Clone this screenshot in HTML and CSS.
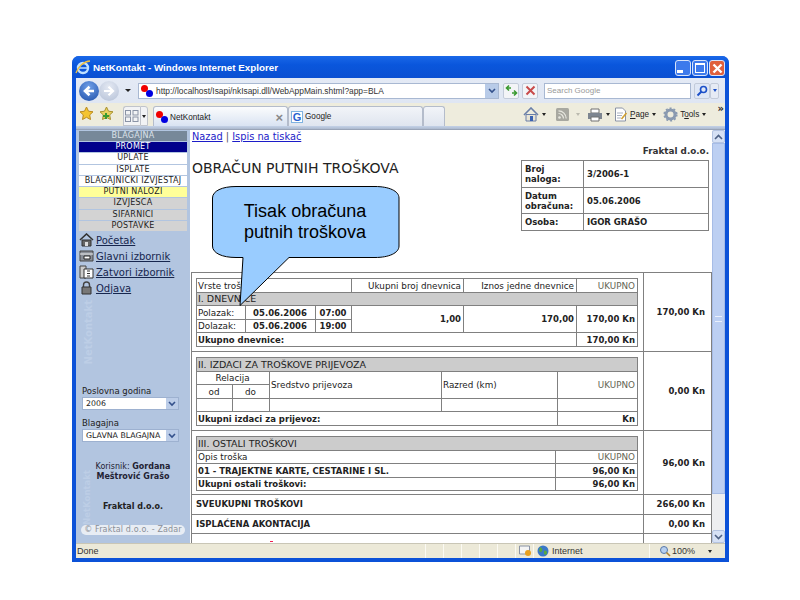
FILE: index.html
```html
<!DOCTYPE html>
<html lang="hr">
<head>
    <meta charset="UTF-8">
    <title>NetKontakt - Windows Internet Explorer</title>
    <link rel="stylesheet" href="styles.css">
</head>
<body>
<div class="window">
    <div class="titlebar">
        <svg class="ie-logo" width="16" height="16" viewBox="0 0 16 16"><circle cx="8" cy="9" r="5" fill="none" stroke="#bfe0ff" stroke-width="2.4"/><path d="M4 9h8" stroke="#bfe0ff" stroke-width="1.6"/><path d="M1 14C3 8 9 2 15 2" fill="none" stroke="#f0c040" stroke-width="1.4"/></svg>
        <span class="title-text">NetKontakt - Windows Internet Explorer</span>
        <div class="win-buttons">
            <span class="win-btn"><i class="glyph-min"></i></span>
            <span class="win-btn"><i class="glyph-max"></i></span>
            <span class="win-btn close">
                <svg width="11" height="11" viewBox="0 0 11 11"><path d="M1.5 1.5l8 8M9.5 1.5l-8 8" stroke="#fff" stroke-width="2.4"/></svg>
            </span>
        </div>
    </div>

    <div class="navbar">
        <span class="round-btn back">
            <svg width="14" height="14" viewBox="0 0 14 14"><path d="M12 7H4M7.5 2.8L3 7l4.5 4.2" fill="none" stroke="#fff" stroke-width="2.6"/></svg>
        </span>
        <span class="round-btn forward">
            <svg width="14" height="14" viewBox="0 0 14 14"><path d="M2 7h8M6.5 2.8L11 7l-4.5 4.2" fill="none" stroke="#fff" stroke-width="2.2"/></svg>
        </span>
        <span class="caret nav-caret"></span>
        <div class="address">
            <span class="favicon"><i class="dot red"></i><i class="dot blue"></i></span>
            <span class="url">http://localhost/Isapi/nkIsapi.dll/WebAppMain.shtml?app=BLA</span>
            <span class="drop-btn"><svg width="8" height="6" viewBox="0 0 8 6"><path d="M1 1l3 3 3-3" fill="none" stroke="#34518c" stroke-width="1.6"/></svg></span>
        </div>
        <span class="tool-btn">
            <svg width="13" height="13" viewBox="0 0 13 13"><path d="M6 4H2M4 1.5L1.5 4 4 6.5" fill="none" stroke="#3a9a30" stroke-width="1.6"/><path d="M7 9h4M9 6.500L11.500 9 9 11.500" fill="none" stroke="#3a9a30" stroke-width="1.6"/></svg>
        </span>
        <span class="tool-btn stop">
            <svg width="11" height="11" viewBox="0 0 11 11"><path d="M1.5 1.5l8 8M9.500 1.500l-8 8" stroke="#c84a4a" stroke-width="2"/></svg>
        </span>
        <div class="search">Search Google</div>
        <span class="tool-btn search-go">
            <svg width="12" height="12" viewBox="0 0 12 12"><circle cx="7.500" cy="4.500" r="3" fill="none" stroke="#1c50c8" stroke-width="1.600"/><path d="M5.500 6.500L1.500 10.500" stroke="#1c50c8" stroke-width="2"/></svg>
        </span>
        <span class="tool-btn search-more"><span class="caret blue-caret"></span></span>
    </div>

    <div class="cmdbar">
        <svg class="star" width="15" height="15" viewBox="0 0 15 15"><path d="M7.500 1l2 4.200 4.500.6-3.300 3.100.8 4.600-4-2.200-4 2.200.8-4.600L1 5.800l4.500-.6z" fill="#f4c430" stroke="#b98a20"/></svg>
        <svg class="star add" width="15" height="15" viewBox="0 0 15 15"><path d="M7.500 1l2 4.200 4.500.6-3.300 3.100.8 4.600-4-2.200-4 2.200.8-4.600L1 5.800l4.500-.6z" fill="#e8d060" stroke="#a89030"/><path d="M4 10h6M7 7v6" stroke="#3a9a30" stroke-width="2"/></svg>
        <span class="tab-list">
            <svg width="14" height="12" viewBox="0 0 14 12"><g fill="none" stroke="#8a93a5"><rect x=".5" y=".5" width="5" height="4.500"/><rect x="8" y=".5" width="5" height="4.500"/><rect x=".5" y="7" width="5" height="4.500"/><rect x="8" y="7" width="5" height="4.500"/></g></svg>
        </span>
        <span class="tab-list-drop"><span class="caret"></span></span>
        <div class="tab active">
            <span class="favicon"><i class="dot red"></i><i class="dot blue"></i></span>
            <span class="tab-name">NetKontakt</span>
            <span class="tab-close">×</span>
        </div>
        <div class="tab">
            <span class="google-icon">G</span>
            <span class="tab-name">Google</span>
        </div>
        <div class="tab new-tab"></div>
        <div class="commands">
            <svg class="home" width="16" height="15" viewBox="0 0 16 15"><path d="M1 8l7-7 7 7" fill="none" stroke="#6a7fa8" stroke-width="1.600"/><path d="M3 7.500h10V14H3z" fill="#e8e4d4" stroke="#6a7fa8"/><path d="M7 9h3v5H7z" fill="#3a62b0"/></svg>
            <span class="caret"></span>
            <svg class="rss" width="13" height="13" viewBox="0 0 13 13"><rect width="13" height="13" rx="1.500" fill="#a8a8a0"/><circle cx="3.500" cy="9.500" r="1.300" fill="#e8e8e0"/><path d="M2.500 5.500a5 5 0 0 1 5 5M2.500 2.800a7.700 7.700 0 0 1 7.700 7.700" fill="none" stroke="#e8e8e0" stroke-width="1.200"/></svg>
            <span class="caret faint"></span>
            <svg class="print" width="16" height="14" viewBox="0 0 16 14"><path d="M4 1h8v4H4z" fill="#fff" stroke="#707070"/><path d="M1 5h14v6H1z" fill="#7d8590"/><path d="M4 9h8v4H4z" fill="#fff" stroke="#707070"/></svg>
            <span class="caret"></span>
            <svg class="page-icon" width="14" height="15" viewBox="0 0 14 15"><path d="M1.500 1h7l3 3v10h-10z" fill="#fff" stroke="#8a93a5"/><path d="M3 6h6M3 8.500h5M3 11h4" stroke="#a8b0c0"/><path d="M12.500 6l-5 6" stroke="#d0a030" stroke-width="1.600"/></svg>
            <span class="cmd-label"><u>P</u>age</span>
            <span class="caret"></span>
            <svg class="gear" width="15" height="15" viewBox="0 0 15 15"><circle cx="7.500" cy="7.500" r="4.500" fill="none" stroke="#8a9ab0" stroke-width="3"/><circle cx="7.500" cy="7.500" r="6.300" fill="none" stroke="#8a9ab0" stroke-width="1.600" stroke-dasharray="2 2"/></svg>
            <span class="cmd-label">T<u>o</u>ols</span>
            <span class="caret"></span>
            <span class="chevrons">»</span>
        </div>
    </div>
    <div class="chrome-line"></div>

    <div class="page">
        <aside class="sidebar">
            <div class="watermark wm-top">NetKontakt</div>
            <div class="watermark wm-bottom">NetKontakt</div>

            <div class="menu">
                <div class="menu-item head">BLAGAJNA</div>
                <div class="menu-item selected">PROMET</div>
                <div class="menu-item plain">UPLATE</div>
                <div class="menu-item plain">ISPLATE</div>
                <div class="menu-item plain">BLAGAJNIČKI IZVJEŠTAJ</div>
                <div class="menu-item current">PUTNI NALOZI</div>
                <div class="menu-item group">IZVJEŠĆA</div>
                <div class="menu-item group">ŠIFARNICI</div>
                <div class="menu-item group">POSTAVKE</div>
            </div>

            <div class="side-links">
                <a class="side-link">
                    <svg width="15" height="14" viewBox="0 0 15 14"><path d="M1 7l6.500-6L14 7" fill="none" stroke="#333" stroke-width="1.600"/><path d="M3 7h9v6H3z" fill="#666" stroke="#333"/><path d="M6 9h3v4H6z" fill="#ddd"/></svg>
                    <span>Početak</span>
                </a>
                <a class="side-link">
                    <svg width="15" height="14" viewBox="0 0 15 14"><path d="M1 2h13v10H1z" fill="#8a8f98" stroke="#444"/><path d="M1 5h13" stroke="#eee"/><path d="M5 7h6v3H5z" fill="#fff" stroke="#222"/></svg>
                    <span>Glavni izbornik</span>
                </a>
                <a class="side-link">
                    <svg width="15" height="14" viewBox="0 0 15 14"><path d="M1 1h6v12H1z" fill="#ccc" stroke="#444"/><path d="M5 4h9v9H5z" fill="#fff" stroke="#333"/><path d="M8 6h3M8 8.500h3M8 11h3" stroke="#333"/></svg>
                    <span>Zatvori izbornik</span>
                </a>
                <a class="side-link">
                    <svg width="15" height="14" viewBox="0 0 15 14"><path d="M4.500 6V4a3 3 0 0 1 6 0v2" fill="none" stroke="#444" stroke-width="1.400"/><path d="M3 6h9v7H3z" fill="#777" stroke="#333"/></svg>
                    <span>Odjava</span>
                </a>
            </div>

            <div class="side-form">
                <label>Poslovna godina</label>
                <div class="fake-select"><span>2006</span><i class="select-btn"><svg width="8" height="6" viewBox="0 0 8 6"><path d="M1 1l3 3 3-3" fill="none" stroke="#34518c" stroke-width="1.600"/></svg></i></div>
                <label class="second">Blagajna</label>
                <div class="fake-select"><span>GLAVNA BLAGAJNA</span><i class="select-btn"><svg width="8" height="6" viewBox="0 0 8 6"><path d="M1 1l3 3 3-3" fill="none" stroke="#34518c" stroke-width="1.600"/></svg></i></div>
            </div>

            <div class="user-info">Korisnik: <b>Gordana</b><br><b>Meštrović Grašo</b></div>
            <div class="firm">Fraktal d.o.o.</div>
            <div class="copyright">© Fraktal d.o.o. - Zadar</div>
        </aside>

        <main class="content">
            <div class="top-links"><a href="#">Nazad</a> | <a href="#">Ispis na tiskač</a></div>

            <div class="report-head">
                <h1>OBRAČUN PUTNIH TROŠKOVA</h1>
                <div class="report-meta">
                    <div class="company">Fraktal d.o.o.</div>
                    <table class="info">
                        <colgroup><col class="c-label"><col></colgroup>
                        <tr class="r27"><th>Broj<br>naloga:</th><td>3/2006-1</td></tr>
                        <tr class="r26"><th>Datum<br>obračuna:</th><td>05.06.2006</td></tr>
                        <tr class="r17"><th>Osoba:</th><td>IGOR GRAŠO</td></tr>
                    </table>
                </div>
            </div>

            <table class="report">
                <colgroup><col class="c-main"><col></colgroup>
                <tr class="sec1">
                    <td class="inner-cell">
                        <table class="grid">
                            <colgroup><col style="width:49px"><col style="width:70px"><col style="width:36px"><col style="width:112px"><col style="width:113px"><col></colgroup>
                            <tr><td colspan="3">Vrste troška</td><td class="right">Ukupni broj dnevnica</td><td class="right">Iznos jedne dnevnice</td><td class="right muted">UKUPNO</td></tr>
                            <tr class="band"><td colspan="6">I. DNEVNICE</td></tr>
                            <tr><td>Polazak:</td><td class="strong center">05.06.2006</td><td class="strong center">07:00</td><td rowspan="2" class="strong right">1,00</td><td rowspan="2" class="strong right">170,00</td><td rowspan="2" class="strong right">170,00 Kn</td></tr>
                            <tr><td>Dolazak:</td><td class="strong center">05.06.2006</td><td class="strong center">19:00</td></tr>
                            <tr><td colspan="5" class="strong">Ukupno dnevnice:</td><td class="strong right">170,00 Kn</td></tr>
                        </table>
                    </td>
                    <td class="total">170,00 Kn</td>
                </tr>
                <tr class="sec2">
                    <td class="inner-cell">
                        <table class="grid">
                            <colgroup><col style="width:36px"><col style="width:37px"><col style="width:172px"><col style="width:116px"><col></colgroup>
                            <tr class="band"><td colspan="5">II. IZDACI ZA TROŠKOVE PRIJEVOZA</td></tr>
                            <tr><td colspan="2" class="center">Relacija</td><td rowspan="2">Sredstvo prijevoza</td><td rowspan="2">Razred (km)</td><td rowspan="2" class="right muted">UKUPNO</td></tr>
                            <tr><td class="center">od</td><td class="center">do</td></tr>
                            <tr><td></td><td></td><td></td><td></td><td></td></tr>
                            <tr><td colspan="4" class="strong">Ukupni izdaci za prijevoz:</td><td class="strong right">Kn</td></tr>
                        </table>
                    </td>
                    <td class="total">0,00 Kn</td>
                </tr>
                <tr class="sec3">
                    <td class="inner-cell">
                        <table class="grid">
                            <colgroup><col style="width:359px"><col></colgroup>
                            <tr class="band"><td colspan="2">III. OSTALI TROŠKOVI</td></tr>
                            <tr><td>Opis troška</td><td class="right muted">UKUPNO</td></tr>
                            <tr><td class="strong">01 - TRAJEKTNE KARTE, CESTARINE I SL.</td><td class="strong right">96,00 Kn</td></tr>
                            <tr><td class="strong">Ukupni ostali troškovi:</td><td class="strong right">96,00 Kn</td></tr>
                        </table>
                    </td>
                    <td class="total">96,00 Kn</td>
                </tr>
                <tr class="sum"><td class="sum-label">SVEUKUPNI TROŠKOVI</td><td class="total">266,00 Kn</td></tr>
                <tr class="sum"><td class="sum-label">ISPLAĆENA AKONTACIJA</td><td class="total">0,00 Kn</td></tr>
                <tr class="sum"><td class="cut-row"><i class="red-mark"></i></td><td></td></tr>
            </table>

            <!-- oblacic preko tablice -->
            <svg class="callout" width="196" height="125" viewBox="0 0 196 125">
                <path d="M25 1.500H164C178 1.500 188 6 188 13V61C188 68 178 72.500 164 72.500H78L29 120.500L32 72.500H25C11 72.500 1.500 68 1.500 61V13C1.500 6 11 1.500 25 1.500Z" fill="#99ccff" stroke="#000"/>
                <text x="94" y="32" text-anchor="middle">Tisak obračuna</text>
                <text x="94" y="53" text-anchor="middle">putnih troškova</text>
            </svg>
        </main>

        <div class="scrollbar">
            <span class="sb-btn"><svg width="9" height="6" viewBox="0 0 9 6"><path d="M1 5l3.500-3.500L8 5" fill="none" stroke="#4d6185" stroke-width="1.600"/></svg></span>
            <div class="sb-thumb"><i></i></div>
            <div class="sb-track"></div>
            <span class="sb-btn"><svg width="9" height="6" viewBox="0 0 9 6"><path d="M1 1l3.500 3.500L8 1" fill="none" stroke="#4d6185" stroke-width="1.600"/></svg></span>
        </div>
    </div>

    <div class="statusbar">
        <span class="status-text">Done</span>
        <span class="status-cell narrow"></span>
        <span class="status-cell narrow"></span>
        <span class="status-cell narrow"></span>
        <span class="status-cell narrow"></span>
        <span class="status-cell narrow"></span>
        <span class="status-cell lock">
            <svg width="13" height="12" viewBox="0 0 13 12"><path d="M.5 1h10v8H.5z" fill="#f5f5f5" stroke="#8a93a5"/><circle cx="9" cy="8" r="3" fill="#e8a020"/></svg>
        </span>
        <span class="status-cell zone">
            <svg width="12" height="12" viewBox="0 0 12 12"><circle cx="6" cy="6" r="5.500" fill="#3a78c8"/><path d="M3 2c2 1 3 2 2 4s-2 1-3 0M7 6c2-1 3 0 3 2s-2 2-3 1z" fill="#58a840"/></svg>
            <span>Internet</span>
        </span>
        <span class="status-cell zoom">
            <svg width="12" height="12" viewBox="0 0 12 12"><circle cx="5" cy="5" r="3.500" fill="#b8d0f0" stroke="#5878a8"/><path d="M7.500 7.500L11 11" stroke="#b08030" stroke-width="1.600"/></svg>
            <span>100%</span>
            <span class="caret"></span>
        </span>
    </div>
</div>
</body>
</html>
```

FILE: styles.css
```css
* {
    margin: 0;
    padding: 0;
    box-sizing: border-box;
}

body {
    background: #fff;
    font-family: "DejaVu Sans", Verdana, sans-serif;
    font-size: 8.5px;
    color: #222;
    overflow: hidden;
}

.window {
    width: 657px;
    height: 506px;
    margin: 56px 0 0 72px;
    padding: 0 4px 4px;
    background: #0c52d8;
    border-radius: 7px 7px 0 0;
    display: flex;
    flex-direction: column;
    overflow: hidden;
}

.caret {
    display: inline-block;
    width: 0;
    height: 0;
    border-left: 3px solid transparent;
    border-right: 3px solid transparent;
    border-top: 3px solid #222;
}

/* title bar */
.titlebar {
    height: 22px;
    flex: none;
    margin: 0 -4px;
    padding: 0 4px 0 3px;
    background: linear-gradient(#1a68e8 0%, #0a56dc 40%, #0b50d2 100%);
    display: flex;
    align-items: center;
    gap: 1px;
}

.title-text {
    font-family: "Liberation Sans", sans-serif;
    font-size: 9.8px;
    font-weight: 700;
    color: #fff;
    margin-left: 1px;
}

.win-buttons {
    margin-left: auto;
    display: flex;
    gap: 1px;
    padding-top: 2px;
}

.win-btn {
    width: 16px;
    height: 16px;
    border: 1px solid #d8e4fa;
    border-radius: 3px;
    background: #3d7aec;
    display: flex;
    align-items: center;
    justify-content: center;
    position: relative;
}

.win-btn.close {
    background: #e0603c;
}

.glyph-min {
    width: 6px;
    height: 3px;
    background: #fff;
    margin: 7px 6px 0 0;
}

.glyph-max {
    width: 10px;
    height: 10px;
    border: 1px solid #fff;
    border-top-width: 2px;
}

/* address row */
.navbar {
    height: 25px;
    flex: none;
    background: linear-gradient(#e4eaf5, #dfe6f3);
    display: flex;
    align-items: center;
    padding-left: 3px;
}

.round-btn {
    width: 20px;
    height: 20px;
    border-radius: 50%;
    display: flex;
    align-items: center;
    justify-content: center;
}

.round-btn.back {
    background: radial-gradient(circle at 50% 30%, #6f9fe8, #1f4fa8);
}

.round-btn.forward {
    background: radial-gradient(circle at 50% 30%, #e4e9f3, #b4c0d6);
}

.nav-caret {
    margin: 0 7px 0 6px;
}

.favicon {
    position: relative;
    width: 12px;
    height: 12px;
    flex: none;
}

.dot {
    position: absolute;
    width: 7px;
    height: 7px;
    border-radius: 50%;
}

.dot.red {
    background: #f00000;
    left: 0;
    top: 0;
}

.dot.blue {
    background: #0000e0;
    right: 0;
    bottom: 0;
}

.address {
    width: 361px;
    height: 16px;
    background: #fff;
    border: 1px solid #a8b8d2;
    display: flex;
    align-items: center;
    padding-left: 2px;
}

.url {
    font-family: "Liberation Sans", sans-serif;
    font-size: 8.4px;
    color: #333;
    margin-left: 3px;
}

.drop-btn {
    margin-left: auto;
    width: 13px;
    height: 14px;
    background: #b8cbe8;
    display: flex;
    align-items: center;
    justify-content: center;
}

.tool-btn {
    width: 16px;
    height: 16px;
    margin-left: 4px;
    background: #f3f4f7;
    border: 1px solid #c3cbd9;
    border-radius: 2px;
    display: flex;
    align-items: center;
    justify-content: center;
}

.tool-btn.stop {
    margin-left: 3px;
}

.search {
    width: 147px;
    height: 16px;
    margin-left: 6px;
    background: #fff;
    border: 1px solid #a8b8d2;
    font-family: "Liberation Sans", sans-serif;
    font-size: 8px;
    line-height: 14px;
    color: #999;
    padding-left: 2px;
}

.tool-btn.search-go {
    margin-left: 3px;
    background: #dfe7f5;
}

.tool-btn.search-more {
    margin-left: 0;
    width: 9px;
    background: #e6ebf5;
}

.blue-caret {
    border-top-color: #1c50c8;
    border-left-width: 2px;
    border-right-width: 2px;
}

/* tabs and commands */
.cmdbar {
    height: 23px;
    flex: none;
    background: #eeecdd;
    display: flex;
    align-items: flex-end;
    padding-left: 3px;
}

.star {
    margin: 0 0 5px 0;
    flex: none;
}

.star.add {
    margin-left: 5px;
}

.tab-list {
    width: 17px;
    height: 20px;
    margin-left: 9px;
    border: 1px solid #c0c4cc;
    border-right: 0;
    border-radius: 3px 0 0 0;
    background: #f2f3f5;
    display: flex;
    align-items: center;
    justify-content: center;
    flex: none;
}

.tab-list-drop {
    width: 8px;
    height: 20px;
    background: #f2f3f5;
    border: 1px solid #c0c4cc;
    border-radius: 0 3px 0 0;
    display: flex;
    align-items: center;
    justify-content: center;
    flex: none;
}

.tab-list-drop .caret {
    border-left-width: 2px;
    border-right-width: 2px;
}

.tab {
    width: 135px;
    height: 20px;
    flex: none;
    background: linear-gradient(#f2f4f8, #dfe5ef);
    border: 1px solid #b4bccb;
    border-bottom: 0;
    border-radius: 3px 3px 0 0;
    display: flex;
    align-items: center;
    padding-left: 2px;
    gap: 2px;
    font-family: "Liberation Sans", sans-serif;
    font-size: 8.2px;
}

.tab.active {
    margin-left: 5px;
    background: linear-gradient(#fbfcfd, #d9e3f2);
    padding-top: 1px;
}

.tab.new-tab {
    width: 22px;
}

.tab-close {
    margin-left: auto;
    margin-right: 4px;
    color: #888;
    font-size: 13px;
    font-weight: 700;
}

.google-icon {
    width: 12px;
    height: 12px;
    border: 1px solid #7fb2e0;
    background: #fff;
    color: #2a62d0;
    font-size: 11px;
    line-height: 10px;
    text-align: center;
    font-weight: 700;
}

.commands {
    flex: 1;
    align-self: stretch;
    display: flex;
    align-items: center;
    padding-left: 78px;
    position: relative;
}

.commands svg,
.commands .caret {
    flex: none;
}

.commands .caret {
    margin: 0 3px;
    border-left-width: 2px;
    border-right-width: 2px;
}

.commands .faint {
    opacity: 0.25;
    margin: 0 7px;
}

.rss {
    margin-left: 7px;
}

.page-icon {
    margin-left: 1px;
}

.gear {
    margin-left: 4px;
}

.cmd-label {
    font-family: "Liberation Sans", sans-serif;
    font-size: 8.2px;
    margin-left: 2px;
}

.chevrons {
    position: absolute;
    right: 1px;
    top: 1px;
    font-size: 10px;
    font-weight: 700;
    line-height: 10px;
}

.chrome-line {
    height: 4px;
    flex: none;
    background: linear-gradient(#c4d2e8, #aebbd0 70%, #8a94a5);
}

/* page */
.page {
    height: 413px;
    flex: none;
    display: flex;
    background: #fff;
}

.sidebar {
    width: 114px;
    flex: none;
    background: #b2c5e0;
    padding: 1px 3px 0;
    display: flex;
    flex-direction: column;
    position: relative;
    overflow: hidden;
}

.watermark {
    position: absolute;
    writing-mode: vertical-rl;
    transform: rotate(180deg);
    color: #bdcee6;
    font-weight: 700;
    white-space: nowrap;
}

.wm-top {
    left: 7px;
    top: 170px;
    font-size: 10px;
}

.wm-bottom {
    left: 6px;
    top: 340px;
    font-size: 8.5px;
}

.menu {
    width: 108px;
    height: 100px;
    display: grid;
    grid-auto-rows: 1fr;
    gap: 1px;
    position: relative;
}

.menu-item {
    font-size: 8px;
    line-height: 10px;
    letter-spacing: 0.25px;
    text-align: center;
    white-space: nowrap;
    overflow: hidden;
    color: #222;
}

.menu-item.head {
    background: #778899;
    color: #dde3ea;
}

.menu-item.selected {
    background: #00008b;
    color: #fff;
}

.menu-item.plain {
    background: #fff;
}

.menu-item.current {
    background: #ffff99;
}

.menu-item.group {
    background: #d3d3d3;
}

.side-links {
    display: flex;
    flex-direction: column;
    margin-top: 1px;
    position: relative;
}

.side-link {
    height: 16px;
    display: flex;
    align-items: center;
    font-size: 10px;
    color: #16264e;
    gap: 2px;
}

.side-link span {
    text-decoration: underline;
}

.side-link svg {
    flex: none;
}

.side-form {
    margin-top: 90px;
    padding-left: 3px;
    position: relative;
}

.side-form label {
    display: block;
    font-size: 8.5px;
    line-height: 11px;
    color: #222;
}

.side-form label.second {
    margin-top: 8px;
}

.fake-select {
    width: 97px;
    height: 13px;
    background: #fff;
    border: 1px solid #9db1d0;
    display: flex;
    align-items: center;
    justify-content: space-between;
    font-size: 7.8px;
    padding-left: 3px;
    white-space: nowrap;
}

.select-btn {
    width: 12px;
    height: 11px;
    flex: none;
    background: #bccde8;
    display: flex;
    align-items: center;
    justify-content: center;
}

.user-info {
    margin-top: 20px;
    padding: 0 8px;
    text-align: center;
    font-size: 8px;
    line-height: 10px;
    color: #223;
    position: relative;
}

.firm {
    margin-top: 20px;
    text-align: center;
    font-size: 8px;
    font-weight: 700;
    position: relative;
}

.copyright {
    margin-top: 14px;
    margin-left: 2px;
    width: 104px;
    height: 10px;
    line-height: 10px;
    border-radius: 5px;
    background: #e8edf4;
    color: #8a8f98;
    font-size: 8px;
    letter-spacing: 0.15px;
    text-align: center;
    white-space: nowrap;
    position: relative;
}

/* report */
.content {
    width: 522px;
    flex: none;
    padding-left: 2px;
    position: relative;
    overflow: hidden;
}

.top-links {
    height: 14px;
    font-size: 9.8px;
    line-height: 13px;
    color: #555;
}

.top-links a {
    color: #1c1cc8;
}

.report-head {
    display: flex;
    justify-content: space-between;
    padding-right: 3px;
    height: 127px;
    margin-top: 1px;
}

.report-head h1 {
    font-size: 14px;
    font-weight: 400;
    margin-top: 15px;
    color: #222;
    white-space: nowrap;
}

.company {
    text-align: right;
    font-weight: 700;
    font-size: 8.8px;
    line-height: 13px;
    height: 15px;
    color: #333;
}

.info {
    width: 188px;
    border-collapse: collapse;
    table-layout: fixed;
    font-size: 8.5px;
}

.info .c-label {
    width: 62px;
}

.info th,
.info td {
    border: 1px solid #808080;
    font-weight: 700;
    text-align: left;
    padding: 0 3px;
    line-height: 10px;
}

.r27 {
    height: 27px;
}

.r26 {
    height: 26px;
}

.r17 {
    height: 17px;
}

.report {
    width: 521px;
    margin-left: -1px;
    border-collapse: collapse;
    table-layout: fixed;
}

.report .c-main {
    width: 452px;
}

.report > tbody > tr > td {
    border: 1px solid #808080;
}

.sec1,
.sec2 {
    height: 79px;
}

.sec3 {
    height: 64px;
}

.sum {
    height: 19.5px;
}

.inner-cell {
    padding: 5px 0 0 4px;
    vertical-align: top;
}

.grid {
    width: 442px;
    border-collapse: collapse;
    table-layout: fixed;
    font-size: 8.8px;
}

.grid tr {
    height: 13px;
}

.grid tr:nth-child(odd) {
    height: 14px;
}

.grid td {
    border: 1px solid #808080;
    padding: 0 2px 0 1px;
    line-height: 10px;
    white-space: nowrap;
    overflow: hidden;
}

.grid .band td {
    background: #cccccc;
    font-size: 9.5px;
}

.grid .strong {
    font-weight: 700;
    font-size: 8.5px;
}

.center {
    text-align: center;
}

.right {
    text-align: right;
}

.muted {
    color: #665;
}

.total {
    text-align: right;
    padding-right: 6px;
    font-weight: 700;
    font-size: 8.5px;
}

.sum-label {
    padding-left: 4px;
    font-weight: 700;
    font-size: 8.5px;
    color: #222;
}

.cut-row {
    vertical-align: top;
    padding: 7px 0 0 78px;
}

.red-mark {
    display: block;
    width: 3px;
    height: 1px;
    background: #f02050;
}

.callout {
    position: absolute;
    left: 21px;
    top: 55px;
    font-family: "Liberation Sans", Arial, sans-serif;
    font-size: 18px;
    fill: #000;
}

/* scrollbar */
.scrollbar {
    width: 13px;
    flex: none;
    display: flex;
    flex-direction: column;
    background: #eef0f4;
}

.sb-btn {
    height: 13px;
    flex: none;
    background: #d6e1f5;
    border: 1px solid #b4c4e2;
    border-radius: 2px;
    display: flex;
    align-items: center;
    justify-content: center;
}

.sb-thumb {
    height: 351px;
    flex: none;
    background: #bccff2;
    border: 1px solid #a6bce6;
    display: flex;
    align-items: center;
    justify-content: center;
}

.sb-thumb i {
    width: 7px;
    height: 6px;
    border-top: 1px solid #eaf0fb;
    border-bottom: 1px solid #eaf0fb;
}

.sb-track {
    flex: 1;
    background: #edeef0;
}

/* status bar */
.statusbar {
    height: 15px;
    flex: none;
    background: #ece9d8;
    border-top: 1px solid #c9c6b6;
    display: flex;
    align-items: center;
    font-family: "Liberation Sans", sans-serif;
    font-size: 9px;
    color: #333;
}

.status-text {
    width: 349px;
    padding-left: 1px;
}

.status-cell {
    height: 100%;
    border-left: 1px solid #fbfaf3;
    display: flex;
    align-items: center;
    gap: 3px;
}

.status-cell.narrow {
    width: 18px;
}

.status-cell.lock {
    width: 18px;
    padding-left: 3px;
}

.status-cell.zone {
    width: 116px;
    padding-left: 3px;
}

.status-cell.zoom {
    flex: 1;
    padding-left: 9px;
    gap: 1px;
}

.status-cell.zoom .caret {
    margin-left: 12px;
    border-left-width: 2px;
    border-right-width: 2px;
}
```
